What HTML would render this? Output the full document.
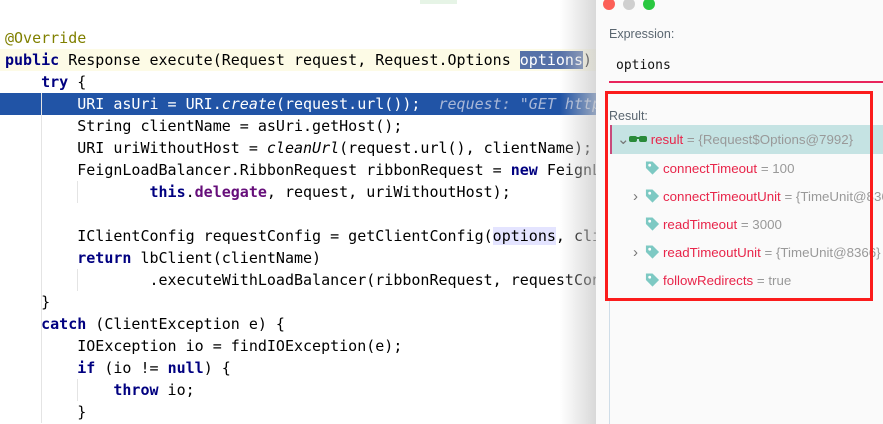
<!DOCTYPE html>
<html><head><meta charset="utf-8"><style>
*{margin:0;padding:0;box-sizing:border-box}
body{width:883px;height:424px;overflow:hidden;background:#fff;position:relative;font-family:"DejaVu Sans Mono","Liberation Mono",monospace}
.code{position:absolute;left:0;top:0;width:600px;height:424px;background:#fff}
.ln{position:absolute;left:5px;font-size:15px;line-height:22px;white-space:pre;color:#000;height:22px}
.kw{color:#000080;font-weight:bold}
.an{color:#808000}
.fld{color:#660e7a;font-weight:bold}
.it{font-style:italic}
.guide{position:absolute;width:1px;background:#e4e4e4}
.panel{position:absolute;left:596px;top:0;width:287px;height:424px;background:#fafafa}
.shadow{position:absolute;left:560px;top:0;width:36px;height:424px;background:linear-gradient(to right,rgba(255,255,255,0),rgba(200,200,200,.7))}
.sans{font-family:"Liberation Sans",sans-serif}
.dot{position:absolute;top:-2px;width:12px;height:12px;border-radius:50%}
.row{position:absolute;left:0;font-family:"Liberation Sans",sans-serif;font-size:13.3px;white-space:nowrap;color:#999;line-height:16px}
.row .n{color:#e8254a}
.tag{display:inline-block;width:15px;height:16px;vertical-align:-3px;margin-right:3px}
.arr{color:#777;font-size:15px;display:inline-block;width:12px}
</style></head><body>
<div class="code">
  <div class="ln" style="top:-16px;color:#888">                                              <span style="background:#e6f4e6">    </span></div>
  <div style="position:absolute;left:0;top:49px;width:600px;height:22px;background:#fdfbe6"></div>
  <div style="position:absolute;left:0;top:93px;width:600px;height:22px;background:#2154a6"></div>
  <div class="guide" style="left:41px;top:93px;height:330px"></div>
  <div class="guide" style="left:77px;top:181px;height:22px"></div>
  <div class="guide" style="left:77px;top:269px;height:22px"></div>
  <div class="guide" style="left:77px;top:379px;height:22px"></div>
  <div class="ln an" style="top:27px">@Override</div>
  <div class="ln" style="top:49px"><span class="kw">public</span> Response execute(Request request, Request.Options <span style="background:#5671a8;color:#fff">options</span>)</div>
  <div class="ln" style="top:71px">    <span class="kw">try</span> {</div>
  <div class="ln" style="top:93px;color:#fff">        URI asUri = URI.<span class="it">create</span>(request.url());  <span class="it" style="color:#a9b8d8">request: "GET http</span></div>
  <div class="ln" style="top:115px">        String clientName = asUri.getHost();</div>
  <div class="ln" style="top:137px">        URI uriWithoutHost = <span class="it">cleanUrl</span>(request.url(), clientName);</div>
  <div class="ln" style="top:159px">        FeignLoadBalancer.RibbonRequest ribbonRequest = <span class="kw">new</span> FeignL</div>
  <div class="ln" style="top:181px">                <span class="kw">this</span>.<span class="fld">delegate</span>, request, uriWithoutHost);</div>
  <div class="ln" style="top:225px">        IClientConfig requestConfig = getClientConfig(<span style="background:#e4e4ff">options</span>, cli</div>
  <div class="ln" style="top:247px">        <span class="kw">return</span> lbClient(clientName)</div>
  <div class="ln" style="top:269px">                .executeWithLoadBalancer(ribbonRequest, requestCon</div>
  <div class="ln" style="top:291px">    }</div>
  <div class="ln" style="top:313px">    <span class="kw">catch</span> (ClientException e) {</div>
  <div class="ln" style="top:335px">        IOException io = findIOException(e);</div>
  <div class="ln" style="top:357px">        <span class="kw">if</span> (io != <span class="kw">null</span>) {</div>
  <div class="ln" style="top:379px">            <span class="kw">throw</span> io;</div>
  <div class="ln" style="top:401px">        }</div>
</div>
<div class="shadow"></div>
<div class="panel">
  <div class="dot" style="left:7px;background:#fc5f57"></div>
  <div class="dot" style="left:27px;background:#cfcfcf"></div>
  <div class="dot" style="left:47px;background:#2ac840"></div>
  <div class="sans" style="position:absolute;left:13px;top:27px;font-size:12.5px;color:#5a6670">Expression:</div>
  <div style="position:absolute;left:20px;top:58px;font-size:13px;color:#111">options</div>
  <div style="position:absolute;left:13px;top:81px;width:274px;height:2px;background:#e8245c"></div>
  <div style="position:absolute;left:13px;top:298px;width:1px;height:126px;background:#cfdde8"></div>
  <div class="sans" style="position:absolute;left:13px;top:109px;font-size:12.5px;color:#5a6670">Result:</div>
  <div style="position:absolute;left:14px;top:125px;width:273px;height:29px;background:#c5e3e3;border-left:2px solid #c84a7a"></div>
</div>
<svg width="0" height="0" style="position:absolute"><defs>
<g id="tg"><path d="M1 1 L8 1 L15 8 L8 15 L1 8 Z" fill="#7dc9c3"/><circle cx="5" cy="5" r="1.5" fill="#fff"/></g>
</defs></svg>
<div class="row" style="left:617px;top:132px"><span class="arr">⌄</span><svg width="18" height="10" style="vertical-align:0"><rect x="0" y="2" width="8" height="6" rx="2" fill="#2a8a3a"/><rect x="10" y="2" width="8" height="6" rx="2" fill="#2a8a3a"/><rect x="7" y="3" width="4" height="2" fill="#2a8a3a"/></svg> <span class="n">result</span> = {Request$Options@7992}</div>
<div class="row" style="left:645px;top:160px"><svg class="tag" viewBox="0 0 16 16"><use href="#tg"/></svg><span class="n">connectTimeout</span> = 100</div>
<div class="row" style="left:633px;top:188px"><span class="arr">›</span><svg class="tag" viewBox="0 0 16 16"><use href="#tg"/></svg><span class="n">connectTimeoutUnit</span> = {TimeUnit@8366}</div>
<div class="row" style="left:645px;top:216px"><svg class="tag" viewBox="0 0 16 16"><use href="#tg"/></svg><span class="n">readTimeout</span> = 3000</div>
<div class="row" style="left:633px;top:244px"><span class="arr">›</span><svg class="tag" viewBox="0 0 16 16"><use href="#tg"/></svg><span class="n">readTimeoutUnit</span> = {TimeUnit@8366} "</div>
<div class="row" style="left:645px;top:272px"><svg class="tag" viewBox="0 0 16 16"><use href="#tg"/></svg><span class="n">followRedirects</span> = true</div>
<div style="position:absolute;left:605px;top:91px;width:268px;height:210px;border:3px solid #fb1c1c"></div>
</body></html>
